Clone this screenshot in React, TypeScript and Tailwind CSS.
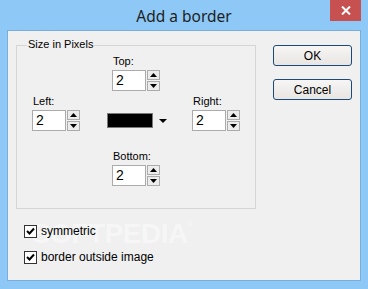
import React from "react";

const font = { fontFamily: '"Liberation Sans", Arial, sans-serif' };

function Spinner() {
  return (
    <div className="flex flex-col gap-[1px]">
      <div className="w-[13px] h-[10px] border border-[#acacac] bg-[#ececec] flex items-center justify-center">
        <svg width="7" height="4" viewBox="0 0 7 4"><path d="M0 4 L3.5 0 L7 4 Z" fill="#000" /></svg>
      </div>
      <div className="w-[13px] h-[10px] border border-[#acacac] bg-[#ececec] flex items-center justify-center">
        <svg width="7" height="4" viewBox="0 0 7 4"><path d="M0 0 L7 0 L3.5 4 Z" fill="#000" /></svg>
      </div>
    </div>
  );
}

function SpinBox({ label }: { label: string }) {
  return (
    <div className="flex flex-col">
      <div className="h-[13px] leading-[13px] text-[11px] text-black pl-[1px]">{label}</div>
      <div className="flex gap-[1px] mt-[2px]">
        <div className="w-[34px] h-[21px] border border-[#ababab] bg-white text-[14px] leading-[19px] pl-[3px] text-black">2</div>
        <Spinner />
      </div>
    </div>
  );
}

function Check({ label }: { label: string }) {
  return (
    <div className="relative z-10 flex items-center h-[13px]">
      <div className="w-[13px] h-[13px] border border-[#333] bg-white flex items-center justify-center">
        <svg width="9" height="9" viewBox="0 0 9 9">
          <path d="M1 4 L3.5 6.5 L8 1.5" stroke="#000" strokeWidth="2" fill="none" />
        </svg>
      </div>
      <span className="ml-[4px] text-[12px] leading-[13px] text-black">{label}</span>
    </div>
  );
}

function Btn({ label }: { label: string }) {
  return (
    <div className="w-[79px] h-[21px] rounded-[3px] border border-[#1b4a78] bg-gradient-to-b from-[#f7f6f5] to-[#e8e5e2] flex items-center justify-center text-[12px] text-black">
      {label}
    </div>
  );
}

export default function App() {
  return (
    <div className="w-[368px] h-[289px] bg-[#8dc8f6] flex flex-col overflow-hidden" style={font}>
      <div className="h-[30px] relative flex items-start justify-center">
        <span className="mt-[5px] text-[15.5px] text-[#1e1e1e]" style={{ fontFamily: '"Noto Sans", "Open Sans", sans-serif' }}>
          Add a border
        </span>
        <div className="absolute right-[7px] top-0 w-[31px] h-[21px] bg-[#c75050] flex items-center justify-center">
          <svg width="10" height="9" viewBox="0 0 10 9">
            <path d="M1 0.5 L9 8.5 M9 0.5 L1 8.5" stroke="#fff" strokeWidth="2" />
          </svg>
        </div>
      </div>
      <div className="ml-[7px] w-[354px] h-[251px] border border-[#79aedb] bg-[#f0f0f0] relative">
        <div className="absolute left-[24px] top-[189px] text-[28px] font-bold leading-none text-[#f6f6f6] tracking-[-0.5px] pointer-events-none select-none" style={{ fontFamily: '"Liberation Sans", Arial, sans-serif' }}>
          SOFTPEDIA<span className="text-[7px] align-top">®</span>
        </div>
        <div className="relative flex pt-[14px] pl-[8px]">
          <div className="w-[240px] flex flex-col">
            <div className="relative w-[240px] h-[164px] border border-[#d5d5d5] flex flex-col">
              <div className="absolute left-[10px] top-[-8px] px-[1px] bg-[#f0f0f0] text-[11px] leading-[13px] text-black">
                Size in Pixels
              </div>
              <div className="mt-[9px] pl-[95px]">
                <SpinBox label="Top:" />
              </div>
              <div className="mt-[4px] pl-[15px] flex items-start">
                <div className="w-[75px]">
                  <SpinBox label="Left:" />
                </div>
                <div className="w-[85px] mt-[18px] flex items-center">
                  <div className="w-[46px] h-[15px] border border-[#7a7a7a] bg-black" />
                  <svg className="ml-[6px]" width="8" height="4" viewBox="0 0 8 4"><path d="M0 0 L8 0 L4 4 Z" fill="#000" /></svg>
                </div>
                <div>
                  <SpinBox label="Right:" />
                </div>
              </div>
              <div className="mt-[19px] pl-[95px]">
                <SpinBox label="Bottom:" />
              </div>
            </div>
            <div className="ml-[8px] mt-[16px] flex flex-col gap-[13px]">
              <Check label="symmetric" />
              <Check label="border outside image" />
            </div>
          </div>
          <div className="ml-[17px] flex flex-col gap-[13px]">
            <Btn label="OK" />
            <Btn label="Cancel" />
          </div>
        </div>
      </div>
    </div>
  );
}
